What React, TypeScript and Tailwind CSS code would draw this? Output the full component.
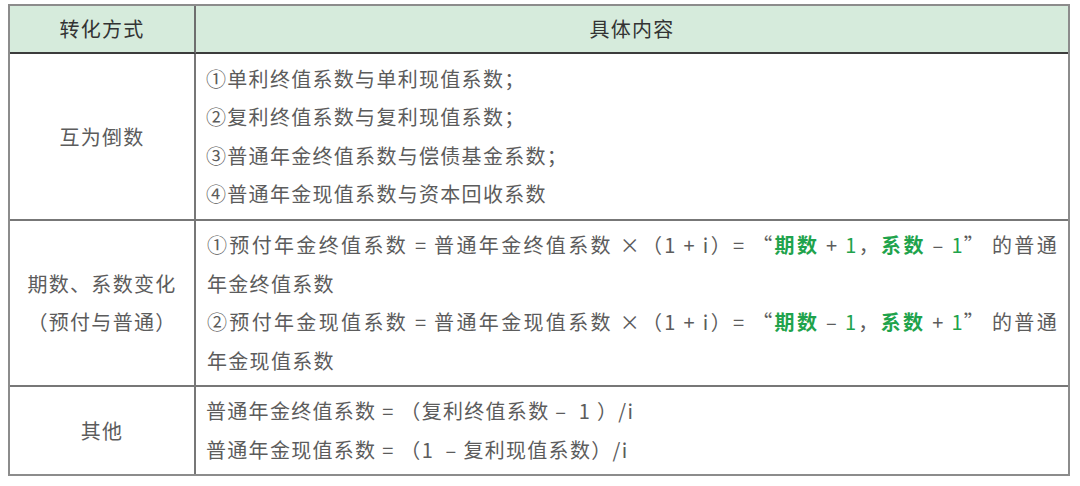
const font = { fontFamily: '"Noto Sans CJK SC", "Noto Sans", sans-serif' };

function G({ children, bold = true }: { children: React.ReactNode; bold?: boolean }) {
  return <span className={`${bold ? "font-bold" : "font-normal"} text-[#1fa34c]`}>{children}</span>;
}

function Line({ children, justify = false }: { children: React.ReactNode; justify?: boolean }) {
  return (
    <div className={justify ? "text-justify [text-align-last:justify]" : ""}>{children}</div>
  );
}

export default function App() {
  return (
    <div className="h-[486px] w-[1080px] bg-white pl-[8px] pt-[4px]" style={font}>
      <div className="grid w-[1062px] grid-cols-[186px_1fr] border-2 border-[#8c8c8c] text-[20px] tracking-[1.3px] text-[#5c5c5c]">
        {/* header */}
        <div className="flex h-[48px] items-center justify-center border-b-2 border-r-2 border-b-[#3c3c3c] border-r-[#6e6e6e] bg-[#d6ebdc] text-[#333]">
          转化方式
        </div>
        <div className="flex h-[48px] items-center justify-center border-b-2 border-b-[#3c3c3c] bg-[#d6ebdc] text-[#333]">
          具体内容
        </div>

        {/* row 1 */}
        <div className="flex h-[167px] items-center justify-center border-b-2 border-r-2 border-[#777]">
          互为倒数
        </div>
        <div className="flex h-[167px] flex-col justify-center border-b-2 border-[#777] px-[10px] leading-[38.5px]">
          <Line>①单利终值系数与单利现值系数；</Line>
          <Line>②复利终值系数与复利现值系数；</Line>
          <Line>③普通年金终值系数与偿债基金系数；</Line>
          <Line>④普通年金现值系数与资本回收系数</Line>
        </div>

        {/* row 2 */}
        <div className="flex h-[166px] flex-col items-center justify-center border-b-2 border-r-2 border-[#777] leading-[38.5px]">
          <div>期数、系数变化</div>
          <div>（预付与普通）</div>
        </div>
        <div className="flex h-[166px] flex-col justify-center border-b-2 border-[#777] pl-[11px] pr-[10px] leading-[38.5px]">
          <Line justify>
            ①预付年金终值系数 = 普通年金终值系数 ×（1 + i）= “<G>期数</G> + <G bold={false}>1</G>，<G>系数</G> – <G bold={false}>1</G>” 的普通
          </Line>
          <Line>年金终值系数</Line>
          <Line justify>
            ②预付年金现值系数 = 普通年金现值系数 ×（1 + i）= “<G>期数</G> – <G bold={false}>1</G>，<G>系数</G> + <G bold={false}>1</G>” 的普通
          </Line>
          <Line>年金现值系数</Line>
        </div>

        {/* row 3 */}
        <div className="flex h-[87px] items-center justify-center border-r-2 border-[#777]">其他</div>
        <div className="flex h-[87px] flex-col justify-center px-[10px] leading-[38.5px] whitespace-pre">
          <Line>普通年金终值系数 = （复利终值系数 –  1 ）/i</Line>
          <Line>普通年金现值系数 = （1  – 复利现值系数）/i</Line>
        </div>
      </div>
    </div>
  );
}
